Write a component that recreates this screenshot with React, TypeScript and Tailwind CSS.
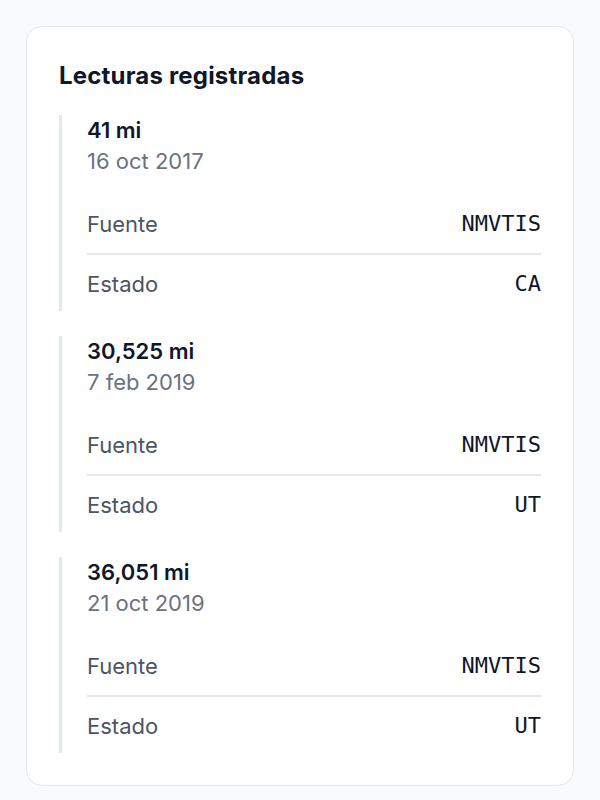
const readings = [
  { miles: "41 mi", date: "16 oct 2017", source: "NMVTIS", state: "CA" },
  { miles: "30,525 mi", date: "7 feb 2019", source: "NMVTIS", state: "UT" },
  { miles: "36,051 mi", date: "21 oct 2019", source: "NMVTIS", state: "UT" },
];

function Row({ label, value, last }: { label: string; value: string; last?: boolean }) {
  return (
    <div
      className={`flex items-center justify-between ${last ? "pt-[14px] pb-[12px]" : "border-b-2 border-[#e5e7eb] py-[14px]"}`}
    >
      <span className="text-[22px] leading-[30px] text-[#4b5563]">{label}</span>
      <span className="font-['DejaVu_Sans_Mono',monospace] text-[22px] leading-[30px] text-[#0f172a]">
        {value}
      </span>
    </div>
  );
}

export default function App() {
  return (
    <div className="min-h-[800px] bg-[#f8fafc] p-[26px] font-['Inter',sans-serif]">
      <div className="rounded-2xl border border-[#e2e8f0] bg-white px-8 pt-[33px] pb-[32px]">
        <h2 className="mb-[23px] text-[24px] font-bold leading-[32px] tracking-[0.008em] text-[#0f172a]">
          Lecturas registradas
        </h2>
        <div className="flex flex-col gap-[25px]">
          {readings.map((r, i) => (
            <div key={i} className="border-l-[3px] border-[#e2e8f0] pl-[25px]">
              <div className="text-[22px] font-semibold leading-[31px] text-[#0f172a]">{r.miles}</div>
              <div className="text-[22px] leading-[31px] text-[#6b7280]">{r.date}</div>
              <div className="mt-[18px]">
                <Row label="Fuente" value={r.source} />
                <Row label="Estado" value={r.state} last />
              </div>
            </div>
          ))}
        </div>
      </div>
    </div>
  );
}
